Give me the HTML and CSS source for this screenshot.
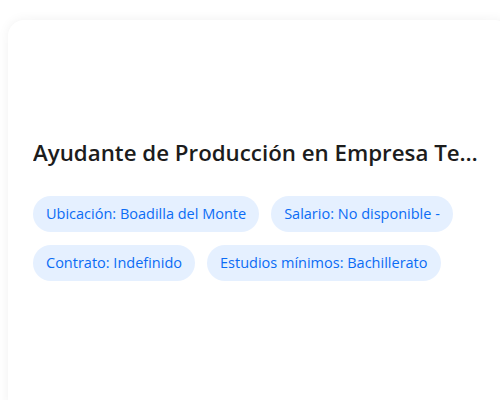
FILE: index.html
```html
<!DOCTYPE html>
<html lang="es">
<head>
    <meta charset="UTF-8">
    <meta name="viewport" content="width=device-width, initial-scale=1.0">
    <title>Oferta de empleo</title>
    <link rel="stylesheet" href="styles.css">
</head>
<body>
    <div class="job-card">
        <h2 class="job-title">Ayudante de Producción en Empresa Textil de Boadilla del Monte</h2>
        <div class="job-tags">
            <span class="tag">Ubicación: Boadilla del Monte</span>
            <span class="tag">Salario: No disponible -</span>
            <span class="tag">Contrato: Indefinido</span>
            <span class="tag">Estudios mínimos: Bachillerato</span>
        </div>
    </div>
</body>
</html>
```

FILE: styles.css
```css
html {
    overflow: hidden;
}

body {
    font-family: 'Open Sans', 'Noto Sans', sans-serif;
    margin: 0;
    padding: 20px 0 0 8px;
    background-color: #ffffff;
    color: #1c1c1c;
}

.job-card {
    width: 502px;
    height: 400px;
    box-sizing: border-box;
    padding: 117px 25px 0 25px;
    background-color: #ffffff;
    border-radius: 16px;
    box-shadow: 0 0 12px rgba(0, 0, 0, 0.06);
}

.job-title {
    margin: 0 0 27px 0;
    font-size: 22.3px;
    font-weight: 600;
    line-height: 32px;
    white-space: nowrap;
    overflow: hidden;
    text-overflow: ellipsis;
}

.job-tags {
    display: flex;
    flex-wrap: wrap;
    gap: 13px 12px;
}

.tag {
    display: inline-block;
    padding: 0 13px;
    height: 36px;
    line-height: 36px;
    font-size: 14.5px;
    font-weight: 500;
    color: #0b6cf5;
    background-color: #e5f0ff;
    border-radius: 18px;
}
```
